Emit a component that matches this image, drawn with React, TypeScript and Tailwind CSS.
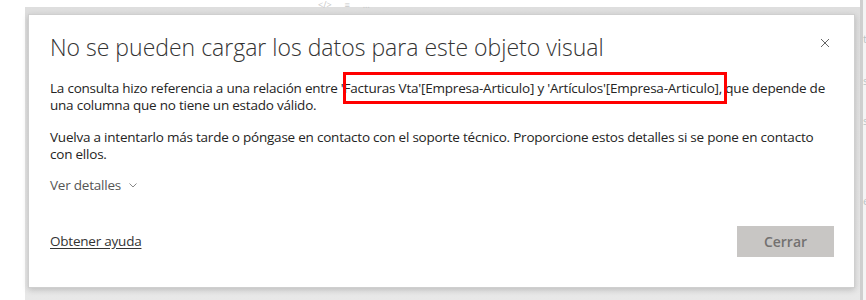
import React from "react";

const CloseIcon = () => (
  <svg width="10" height="10" viewBox="0 0 10 10" fill="none" stroke="#666" strokeWidth="1">
    <path d="M1 1l8 8M9 1l-8 8" />
  </svg>
);

const Chevron = () => (
  <svg width="8" height="5" viewBox="0 0 8 5" fill="none" stroke="#888" strokeWidth="1">
    <path d="M0.5 0.5l3.5 3.5 3.5-3.5" />
  </svg>
);

export default function App() {
  return (
    <div
      className="w-[866px] h-[300px] bg-white flex overflow-hidden text-[#252423]"
      style={{ fontFamily: '"Segoe UI", "Open Sans", sans-serif' }}
    >
      {/* left gap */}
      <div className="w-[25px] shrink-0" />

      <div className="relative w-[835px] shrink-0 flex flex-col">
        {/* visual header icons peeking above the dialog */}
        <div className="absolute z-10 top-0 left-[293px] flex items-center gap-[13px] text-[9px] leading-[10px] text-[#c8c8c8]">
          <span>&lt;/&gt;</span>
          <span>≡</span>
          <span>…</span>
        </div>

        {/* backdrop behind the dialog */}
        <div className="mt-[7px] flex-1 bg-gradient-to-b from-[#dedede] to-[#e8e8e8] pt-[7px] pl-[3px]">
          <div className="w-[827px] h-[274px] bg-white border border-[#cfcfcf] shadow-[0_2px_6px_rgba(0,0,0,0.18)] flex flex-col pl-[21px] pr-[20px] pt-[16px] pb-[30px]">
            <div className="flex items-start justify-between">
              <h1 className="text-[23px] leading-[32px] font-light text-[#333]">
                No se pueden cargar los datos para este objeto visual
              </h1>
              <button className="mt-[5px] mr-[2px] p-[2px]">
                <CloseIcon />
              </button>
            </div>

            <p className="mt-[17px] text-[13.5px] leading-[17px] tracking-[-0.22px] pr-[6px]">
              La consulta hizo referencia a una relación entre '
              <span className="relative">
                Facturas Vta'[Empresa-Articulo] y 'Artículos'[Empresa-Articulo],
                <span className="absolute left-[-1px] right-[-5px] top-[-7px] bottom-[-7px] border-[3px] border-[#ff0000] pointer-events-none" />
              </span>{" "}
              que depende de una columna que no tiene un estado válido.
            </p>

            <p className="mt-[15px] text-[13.5px] leading-[17px] tracking-[-0.22px] pr-[6px]">
              Vuelva a intentarlo más tarde o póngase en contacto con el soporte técnico. Proporcione estos
              detalles si se pone en contacto con ellos.
            </p>

            <div className="mt-[14px] flex items-center gap-[8px] text-[13.5px] leading-[17px] tracking-[-0.22px] text-[#555]">
              <span>Ver detalles</span>
              <Chevron />
            </div>

            <div className="mt-auto flex items-end justify-between">
              <a className="text-[13.5px] leading-[17px] tracking-[-0.22px] underline underline-offset-2 text-[#333] mb-[7px]">
                Obtener ayuda
              </a>
              <button className="w-[97px] h-[31px] bg-[#c8c6c4] text-[14px] font-semibold text-[#737170]">
                Cerrar
              </button>
            </div>
          </div>
        </div>
      </div>

      {/* right edge of the report canvas */}
      <div className="flex-1 border-l-[3px] border-[#cfcfcf] bg-[#f4f4f4] flex flex-col text-[11px] leading-[12px] text-[#b8c4c4] pt-[33px]">
        <span>t</span>
        <span className="mt-[30px]">s</span>
        <span className="mt-[28px]">s</span>
        <span className="mt-[68px]">e</span>
      </div>
    </div>
  );
}
